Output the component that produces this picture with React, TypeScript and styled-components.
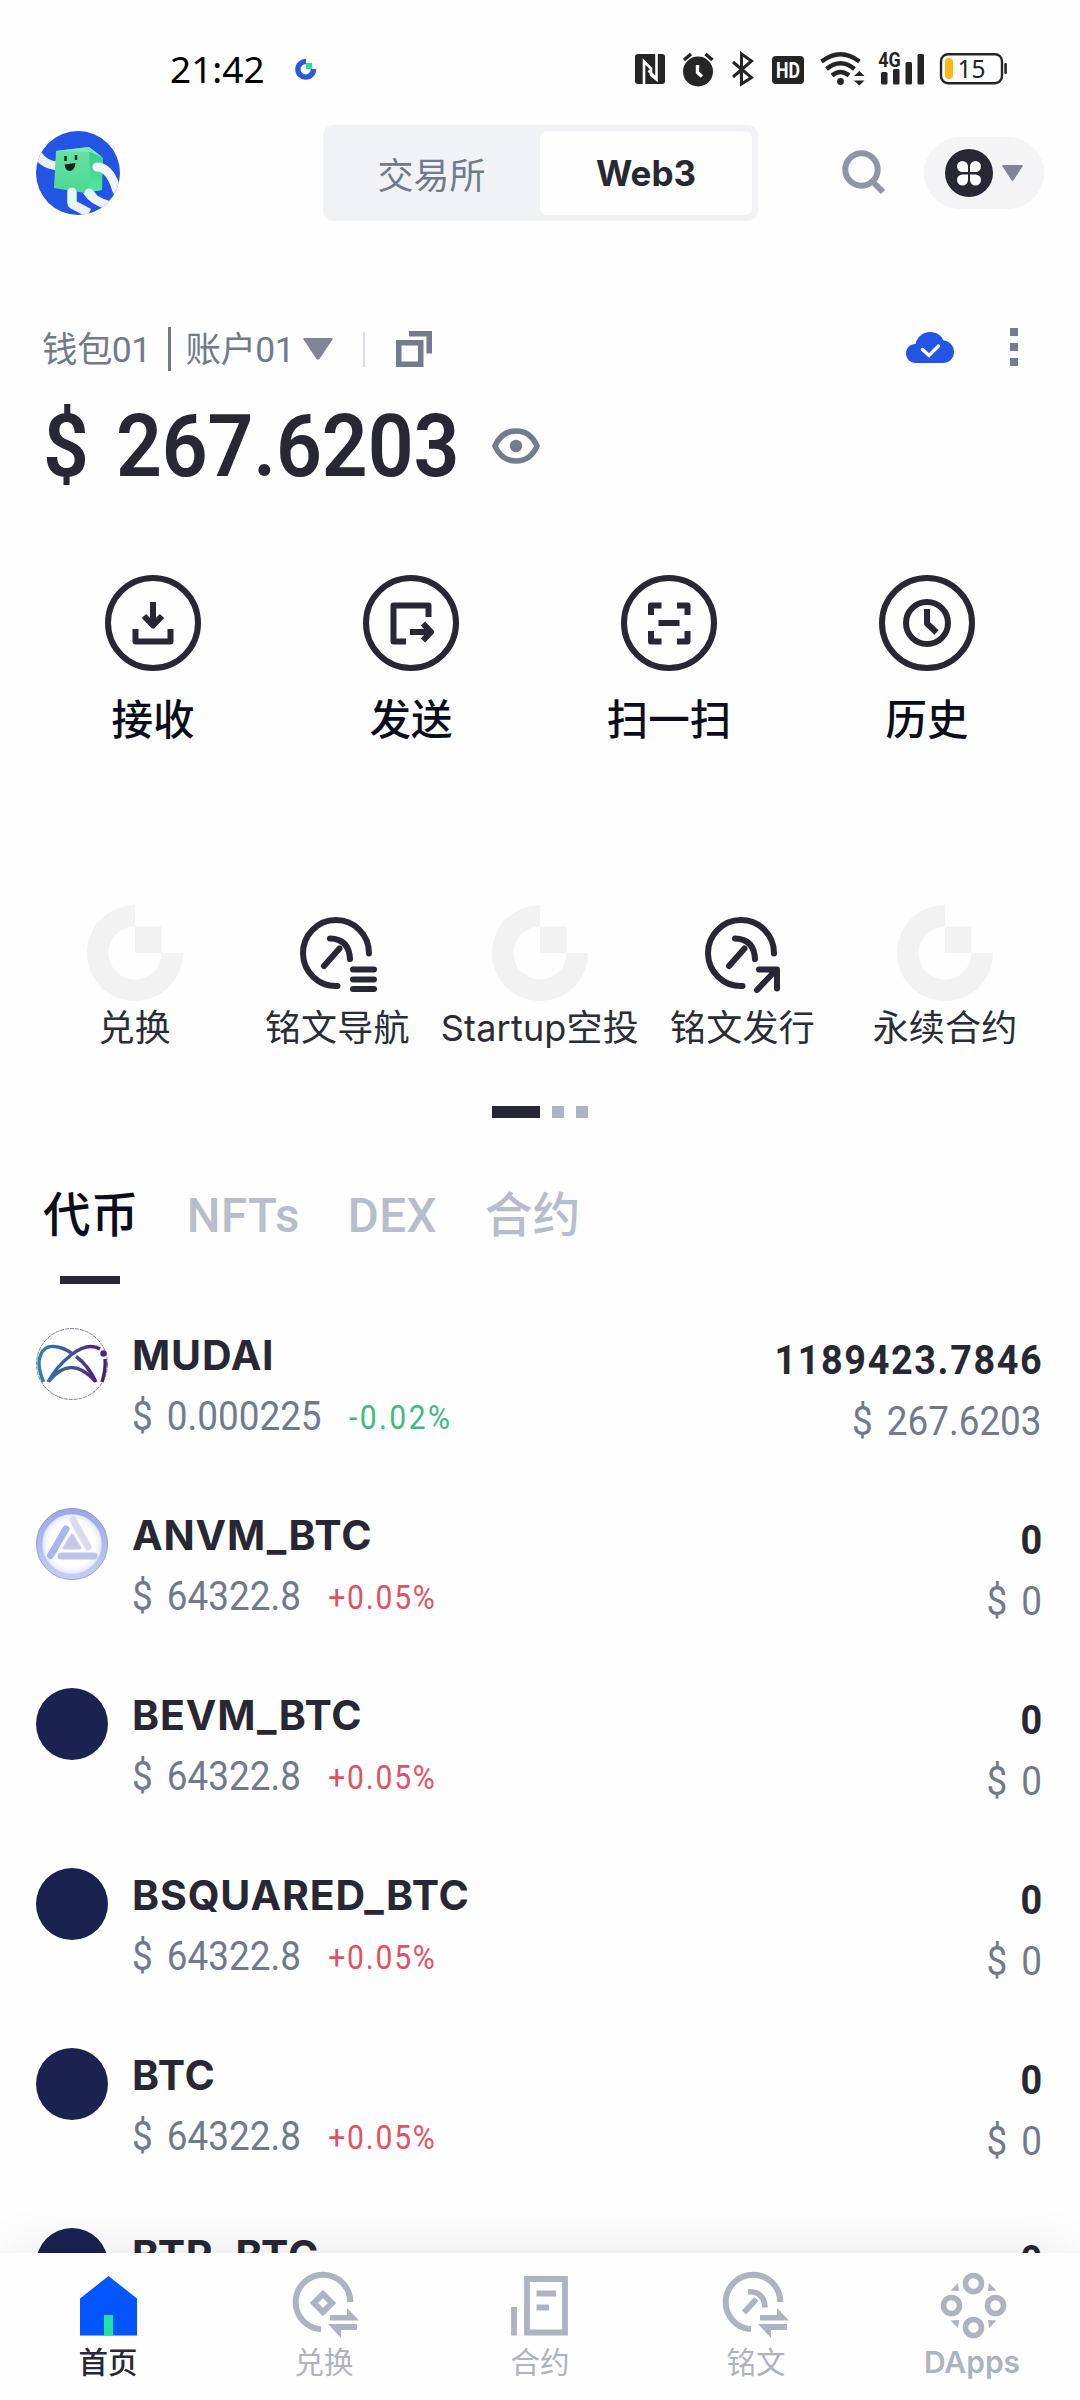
import React from 'react';
import styled, { createGlobalStyle } from 'styled-components';

const INK = '#272833';
const SLATE = '#717a8c';
const MUTED = '#adb3c0';
const UI = `Inter, 'Noto Sans CJK SC', sans-serif`;
const NUM = `Roboto, 'Noto Sans CJK SC', sans-serif`;

const GlobalStyle = createGlobalStyle`
  * { box-sizing: border-box; }
  body { margin: 0; background: #fefefe; }
`;

const Screen = styled.div`
  width: 1080px;
  height: 2400px;
  display: flex;
  flex-direction: column;
  overflow: hidden;
  background: #fefefe;
  color: ${INK};
  font-family: ${UI};
  white-space: nowrap;
`;

const Content = styled.main`
  flex: 1;
  min-height: 0;
  overflow: hidden;
`;

/* status bar */
const StatusBar = styled.div`
  display: flex;
  align-items: center;
  justify-content: space-between;
  height: 40px;
  margin-top: 49px;
  padding: 0 72px 0 170px;
`;
const StatusLeft = styled.div`
  display: flex;
  align-items: center;
  gap: 30px;
`;
const Clock = styled.span`
  font: 400 37px/40px 'Noto Sans', sans-serif;
  color: #000;
`;

/* header */
const Header = styled.header`
  display: flex;
  align-items: center;
  height: 96px;
  margin-top: 36px;
  padding: 0 36px;
`;
const Segment = styled.div`
  display: flex;
  width: 435px;
  height: 96px;
  margin-left: 203px;
  padding: 6px;
  border-radius: 10px;
  background: #f1f2f6;
`;
const SegmentItem = styled.div<{ $active?: boolean }>`
  flex: none;
  width: ${p => (p.$active ? 212 : 211)}px;
  line-height: ${p => (p.$active ? 84 : 90)}px;
  text-align: center;
  border-radius: 7px;
  font-size: ${p => (p.$active ? 35 : 36)}px;
  font-weight: ${p => (p.$active ? 700 : 400)};
  color: ${p => (p.$active ? INK : SLATE)};
  background: ${p => (p.$active ? '#fefefe' : 'transparent')};
  padding-right: ${p => (p.$active ? 0 : 6)}px;
`;
const SearchSlot = styled.div`
  display: flex;
  margin-left: 84px;
`;
const NetworkPill = styled.div`
  display: flex;
  align-items: center;
  gap: 9px;
  width: 120px;
  height: 72px;
  margin-left: auto;
  padding-left: 21px;
  border-radius: 36px;
  background: #f4f4f7;
`;

/* account */
const AccountRow = styled.div`
  display: flex;
  align-items: center;
  height: 44px;
  margin-top: 106px;
  padding: 0 62.5px 0 42px;
  color: ${SLATE};
`;
const AccountName = styled.span<{ $width: number }>`
  width: ${p => p.$width}px;
  padding-top: 1px;
  font: 400 35.5px/44px ${NUM};
  letter-spacing: -0.6px;
`;
const Bar = styled.i<{ $h: number; $c: string; $m: string }>`
  width: 2.5px;
  height: ${p => p.$h}px;
  margin: ${p => p.$m};
  background: ${p => p.$c};
`;
const CloudSlot = styled.div`
  display: flex;
  margin-left: auto;
  padding-bottom: 2px;
`;
const MenuDots = styled.div`
  display: flex;
  flex-direction: column;
  gap: 7px;
  margin: -4px 0 0 56px;
`;
const MenuDot = styled.i`
  width: 8px;
  height: 8px;
  background: #767b8e;
`;
const BalanceRow = styled.div`
  display: flex;
  align-items: center;
  height: 80px;
  margin-top: 35px;
  padding-left: 43px;
`;
const Balance = styled.div`
  width: 449px;
  font: 600 87px/80px ${NUM};
  letter-spacing: -0.2px;
  word-spacing: 8px;
  transform: scaleX(0.925);
  transform-origin: left center;
`;

/* actions */
const Actions = styled.div`
  display: grid;
  grid-template-columns: repeat(4, 258px);
  margin: 89px 0 0 24px;
`;
const Action = styled.div`
  display: flex;
  flex-direction: column;
  align-items: center;
`;
const ActionLabel = styled.span`
  margin-top: 25px;
  font-size: 41.5px;
  line-height: 48px;
  font-weight: 500;
  color: #0b0e1a;
`;
const Services = styled.div`
  display: grid;
  grid-template-columns: repeat(5, 202.6px);
  margin: 161px 0 0 33.4px;
`;
const ServiceLabel = styled.span`
  margin-top: 3px;
  font-size: 36px;
  line-height: 48px;
  letter-spacing: 0.2px;
  color: #2a2c36;
`;
const Pager = styled.div`
  display: flex;
  justify-content: center;
  gap: 12px;
  margin-top: 54px;
`;
const PagerMark = styled.i<{ $active?: boolean }>`
  width: ${p => (p.$active ? 48 : 12)}px;
  height: 12px;
  background: ${p => (p.$active ? INK : '#adb3c3')};
`;

/* asset tabs */
const Tabs = styled.div`
  display: flex;
  gap: 48px;
  margin: 70px 0 0 43px;
`;
const Tab = styled.div<{ $active?: boolean }>`
  display: flex;
  flex-direction: column;
  align-items: center;
  height: 96px;
  font: 500 47.5px/56px ${NUM};
  letter-spacing: 0.4px;
  color: ${p => (p.$active ? '#0b0e1a' : '#b8bdcb')};
`;
const TabLine = styled.i`
  width: 60px;
  height: 9px;
  margin: 32px 2px 0 0;
  background: ${INK};
`;

/* token list */
const TokenList = styled.div`
  margin-top: 44px;
`;
const TokenRow = styled.div`
  display: flex;
  height: 180px;
  padding: 0 38px 0 36px;
`;
const TokenInfo = styled.div`
  flex: 1;
  margin-left: 24px;
  padding-top: 2px;
`;
const TokenName = styled.div`
  font-size: 41px;
  line-height: 50px;
  font-weight: 700;
  letter-spacing: 0.85px;
`;
const PriceLine = styled.div`
  display: flex;
  align-items: center;
  gap: 30px;
  margin-top: 13px;
  transform: scaleX(0.91);
  transform-origin: left center;
`;
const Money = styled.span`
  font: 400 40.5px/46px ${NUM};
  word-spacing: 5.5px;
  color: ${SLATE};
`;
const Change = styled.span<{ $down?: boolean }>`
  padding-top: 3px;
  font: 400 33px/43px ${NUM};
  letter-spacing: ${p => (p.$down ? 2.7 : 2)}px;
  color: ${p => (p.$down ? '#3dba84' : '#e25163')};
`;
const TokenTotals = styled.div`
  display: flex;
  flex-direction: column;
  align-items: flex-end;
  padding-top: 7px;
  transform: scaleX(0.91);
  transform-origin: right center;
`;
const Amount = styled.span`
  margin: 0 -2px 13px 0;
  font: 700 41.5px/50px ${NUM};
  letter-spacing: 1.8px;
`;
const TokenDisc = styled.div`
  width: 72px;
  height: 72px;
  border-radius: 50%;
  background: #1a2250;
`;

/* bottom navigation */
const BottomNav = styled.nav`
  position: relative;
  z-index: 1;
  flex: none;
  display: grid;
  grid-template-columns: repeat(5, 216px);
  height: 147px;
  padding-top: 16px;
  background: #fefefe;
  box-shadow: 0 -12px 56px -14px rgba(0, 0, 0, 0.11);
`;
const NavItem = styled.div`
  display: flex;
  flex-direction: column;
  align-items: center;
`;
const NavLabel = styled.span<{ $active?: boolean; $latin?: boolean }>`
  font-size: ${p => (p.$latin ? 30 : 29.5)}px;
  line-height: 43px;
  font-weight: ${p => (p.$latin ? 600 : p.$active ? 500 : 400)};
  color: ${p => (p.$active ? INK : MUTED)};
`;

const StatusMark = () => (
  <svg width="22" height="22" viewBox="0 0 22 22">
    <path d="M11 3.5A7.8 7.8 0 1 0 18.5 11" fill="none" stroke="#2a58de" strokeWidth="5.4" />
    <rect x="11" y="5" width="6" height="6" fill="#27dfa5" />
  </svg>
);

const StatusIcons = () => (
  <svg width="374" height="36" viewBox="634 51 374 36" fill="#252525">
    <rect x="635" y="54" width="30" height="30" rx="3" />
    <path d="M644 84V61.500l7 7v6.500l5.500 4.500V54M656.500 79l-8-8.500" fill="none" stroke="#fefefe" strokeWidth="2.600" />
    <circle cx="698" cy="71.500" r="15" />
    <path d="M684 60l7-6M712.500 60l-7-6" stroke="#252525" strokeWidth="3.400" />
    <path d="M697.500 65v7.500l4.500 4" fill="none" stroke="#fefefe" strokeWidth="3.400" />
    <path d="M733 62l18.500 15.500L741.500 84V54l10 7L733 77" fill="none" stroke="#252525" strokeWidth="3" />
    <rect x="772" y="56" width="32" height="28" rx="4" />
    <text x="788" y="77.500" textAnchor="middle" fontFamily="Roboto, sans-serif" fontWeight="700" fontSize="22" textLength="24" lengthAdjust="spacingAndGlyphs" fill="#fefefe">HD</text>
    <g fill="none" stroke="#252525" strokeWidth="4.400">
      <path d="M821.500 61.500q19-14.500 38 0" />
      <path d="M826.500 69q14-11.500 28 0" />
      <path d="M832 75.500q8.500-7 17 0" />
    </g>
    <circle cx="840.500" cy="81.500" r="3.400" />
    <path d="M854 76h10.500l-5.200-5zM854 80.500h10.500l-5.200 5z" />
    <text x="889.500" y="67" textAnchor="middle" fontFamily="Roboto, sans-serif" fontWeight="700" fontSize="20" textLength="22.500" lengthAdjust="spacingAndGlyphs">4G</text>
    <rect x="881" y="72" width="6.500" height="12.500" rx="1.500" />
    <rect x="893" y="69" width="6.500" height="15.500" rx="1.500" />
    <rect x="905.500" y="62" width="6.500" height="22.500" rx="1.500" />
    <rect x="917.500" y="54" width="6.500" height="30.500" rx="1.500" />
    <rect x="941" y="54.200" width="61" height="29" rx="7" fill="none" stroke="#252525" strokeWidth="2.400" />
    <rect x="1004.300" y="63" width="2.600" height="11" rx="1.300" />
    <rect x="945" y="58" width="8" height="21" rx="4" fill="#fdb813" />
    <text x="971.500" y="77.500" textAnchor="middle" fontFamily="'Noto Sans', sans-serif" fontSize="24.500">15</text>
  </svg>
);

const Avatar = () => (
  <svg width="84" height="84" viewBox="0 0 84 84">
    <defs>
      <clipPath id="avatarClip"><circle cx="42" cy="42" r="42" /></clipPath>
      <linearGradient id="cubeFace" x1="0" y1="0" x2="0" y2="1">
        <stop offset="0" stopColor="#6be0a3" />
        <stop offset="1" stopColor="#4bd996" />
      </linearGradient>
      <linearGradient id="cubeSide" x1="0" y1="0" x2="0" y2="1">
        <stop offset="0" stopColor="#37c987" />
        <stop offset="1" stopColor="#52e79f" />
      </linearGradient>
    </defs>
    <g clipPath="url(#avatarClip)">
      <rect width="84" height="84" fill="#2454e4" />
      <g fill="none" stroke="#eef1fd" strokeLinejoin="round">
        <path d="M2 24q6 10 20 11" strokeWidth="9" />
        <path d="M36 54v19l17 9" strokeWidth="9" />
        <path d="M51 60q6 10 21 14" strokeWidth="9" />
      </g>
      <path d="M20 20l33-4 13 10-1 33-16 3-31-5z" fill="url(#cubeFace)" />
      <path d="M53 17l14 10-1 32-12 2z" fill="url(#cubeSide)" />
      <path d="M20 20l33-4 13 10-12-5z" fill="#7eebb2" />
      <path d="M61 36q13 0 20 24" fill="none" stroke="#f2f3fe" strokeWidth="9" strokeLinecap="round" />
      <path d="M36 61v10M53 62l3 3" stroke="#e6f8f8" strokeWidth="9" strokeLinecap="round" />
      <path d="M29.500 25v5M40 24v5" stroke="#10231c" strokeWidth="2.400" />
      <path d="M28.500 33.500l11-1.500q-1 8-6 8-4 0-5-6.500z" fill="#10231c" />
    </g>
  </svg>
);

const SearchIcon = () => (
  <svg width="44" height="46" viewBox="0 0 44 46" fill="none" stroke="#8f95a5" strokeWidth="6">
    <circle cx="19.500" cy="19.500" r="16.200" />
    <path d="M31 32l10 10" />
  </svg>
);

const CloverIcon = () => (
  <svg width="48" height="48" viewBox="0 0 48 48">
    <circle cx="24" cy="24" r="24" fill={INK} />
    <path d="M23 23h-5.500a5.500 5.500 0 1 1 5.500-5.500zM25 23h5.500a5.500 5.500 0 1 0-5.500-5.500zM23 25.500h-5.500a5.500 5.500 0 1 0 5.500 5.500zM25 25.500h5.500a5.500 5.500 0 1 1-5.500 5.500z" fill="#fefefe" />
  </svg>
);

const Caret = ({ w, h }: { w: number; h: number }) => (
  <svg width={w} height={h} viewBox="0 0 30 22" preserveAspectRatio="none">
    <path d="M1.500 0h27q2 0 1 1.600L16.500 21q-1.500 1.600-3 0L.5 1.600Q-.5 0 1.500 0z" fill="#7f8596" />
  </svg>
);

const CopyIcon = () => (
  <svg width="36" height="36" viewBox="0 0 36 36" fill="none" stroke="#757b8e" strokeWidth="5.500">
    <rect x="2.750" y="11.750" width="22" height="21.500" />
    <path d="M13 2.750h20.250V22.500" />
  </svg>
);

const CloudIcon = () => (
  <svg width="48" height="32" viewBox="0 0 48 32">
    <path d="M10 31C4 31 0 26.500 0 21.500c0-5.500 4-9.500 9.500-9.500C11 5.500 16.500 0 24 0c6.500 0 11.500 3.500 13.500 8.500C43.500 9 48 13.500 48 20c0 6.500-5 11-11 11z" fill="#2454e4" />
    <path d="M16.500 17.500l6.500 6 9.500-9.500" fill="none" stroke="#fff" strokeWidth="3.400" strokeLinecap="round" />
  </svg>
);

const EyeIcon = () => (
  <svg width="48" height="36" viewBox="0 0 48 36" fill="none">
    <path d="M3 18Q9.500 3 24 3t21 15Q38.500 33 24 33T3 18z" stroke="#757b8e" strokeWidth="5.600" />
    <circle cx="24" cy="18" r="6.200" fill="#757b8e" />
  </svg>
);

const ringPaths: Record<string, React.ReactNode> = {
  receive: <path d="M48 27v23M39 41l9 9.500 9-9.500M30.500 54v12.500h35V54" />,
  send: <path d="M43 66.500H30.500v-36h35V42M47 57h20M60 48.500l8 8.500-8 8.500" />,
  scan: <path d="M30 40v-9.500h10.500M56 30.500h10.500V40M66.500 56v10.500H56M40.500 66.500H30V56M37.500 48h21" />,
  history: (
    <>
      <circle cx="48" cy="48" r="21" />
      <path d="M48 34v14.500l9.500 9" />
    </>
  ),
};

const RingIcon = ({ kind }: { kind: string }) => (
  <svg width="96" height="96" viewBox="0 0 96 96" fill="none" stroke={INK} strokeWidth="6" strokeLinejoin="round">
    <circle cx="48" cy="48" r="45" />
    {ringPaths[kind]}
  </svg>
);

const ServiceIcon = ({ kind }: { kind: string }) => {
  if (kind === 'logo') {
    return (
      <svg width="96" height="96" viewBox="0 0 96 96" fill="#f2f2f2">
        <path d="M48 0v21.500A26.500 26.500 0 1 0 74.500 48H96A48 48 0 1 1 48 0z" />
        <rect x="48" y="21.500" width="26.500" height="26.500" />
      </svg>
    );
  }
  return (
    <svg width="96" height="96" viewBox="0 0 96 96" fill="none" stroke={INK} strokeWidth="6" strokeLinecap="round" strokeLinejoin="round">
      <path d="M80 48.500A33 33 0 1 0 48.500 81" />
      <path d="M41 33.500Q60 34 61 54M35 61l15.500-17.500" />
      {kind === 'list' ? <path d="M64 64.500h21M64 74.500h21M64 84h21" /> : <path d="M65 64.500h18v19M63 85l19-20" />}
    </svg>
  );
};

const MudaiLogo = () => (
  <svg width="72" height="72" viewBox="0 0 72 72" fill="none">
    <defs>
      <linearGradient id="mudai" gradientUnits="userSpaceOnUse" x1="2" y1="36" x2="70" y2="36">
        <stop offset="0" stopColor="#2f80b4" />
        <stop offset="0.45" stopColor="#3f5799" />
        <stop offset="0.8" stopColor="#4b2b80" />
        <stop offset="1" stopColor="#44206e" />
      </linearGradient>
    </defs>
    <circle cx="36" cy="36" r="35.500" stroke="#74798c" strokeWidth="0.900" strokeDasharray="4 1" />
    <g stroke="url(#mudai)" strokeWidth="3.400">
      <path d="M7.500 54Q0 36 5 26 9 17.500 18 18.500q9 .5 18 7M40 28.500Q52 37 60 54" />
      <path d="M12 54q8-15 23-27Q52 14 64 21M13 53q22-27 46 0M69 31q1 10-3 23" />
    </g>
    <circle cx="67.500" cy="25.500" r="3.200" fill="#48257a" />
  </svg>
);

const AnvmLogo = () => (
  <svg width="72" height="72" viewBox="0 0 72 72" fill="none">
    <defs>
      <linearGradient id="anvmRing" x1="0" y1="0" x2="0" y2="1">
        <stop offset="0" stopColor="#98a9ee" />
        <stop offset="1" stopColor="#c5cdf4" />
      </linearGradient>
      <radialGradient id="anvmFill">
        <stop offset="0.700" stopColor="#fff" />
        <stop offset="1" stopColor="#d8dff9" />
      </radialGradient>
    </defs>
    <circle cx="36" cy="36" r="32.700" fill="url(#anvmFill)" stroke="url(#anvmRing)" strokeWidth="6" />
    <circle cx="36" cy="36" r="35.600" stroke="#8088a8" strokeWidth="0.600" />
    <g strokeLinecap="round" strokeWidth="7">
      <path d="M37 12l15 27" stroke="#d9dbee" />
      <path d="M30 21L14.500 47.500" stroke="#a9b6ef" />
      <path d="M25 48h33" stroke="#bcc3e4" />
    </g>
    <path d="M36 27l8 13H28z" fill="#c6cae9" stroke="#c6cae9" strokeWidth="3" strokeLinejoin="round" />
  </svg>
);

const swapArrows = 'M42 46h17v-7l12 12.500H42zM40 55h29v6H53v8z';

const NavIcon = ({ kind }: { kind: string }) => (
  <svg width="72" height="72" viewBox="0 0 72 72" fill="none">
    {kind === 'home' && (
      <>
        <path d="M36.500 7L65 29.500V66.500H8V29.500z" fill="#0356fd" />
        <rect x="32" y="46" width="9" height="20.500" fill="#1fe0a5" />
      </>
    )}
    {(kind === 'swap' || kind === 'inscribe') && (
      <g transform={kind === 'inscribe' ? 'translate(-2 0)' : undefined}>
        <path d="M62.300 33A27.300 27.300 0 1 0 33 60.300" stroke={MUTED} strokeWidth="6" />
        <path d={swapArrows} fill={MUTED} />
        {kind === 'swap' ? (
          <path d="M35 25l9 9-9 9-9-9z" stroke={MUTED} strokeWidth="6" />
        ) : (
          <path d="M30 22.800Q46 22 47 38.500M26 43.500l12.500-13.500" stroke={MUTED} strokeWidth="5.600" />
        )}
      </g>
    )}
    {kind === 'contract' && (
      <path d="M10 38v28.500M23 10h38v53.500H23zM32.500 24.500H52M32.500 38.500H45" stroke={MUTED} strokeWidth="5.800" />
    )}
    {kind === 'dapps' && (
      <>
        <g stroke={MUTED} strokeWidth="5.600">
          <circle cx="37.500" cy="14.500" r="8" />
          <circle cx="15.500" cy="36.500" r="8" />
          <circle cx="59.500" cy="36.500" r="8" />
          <circle cx="37.500" cy="58.500" r="8" />
        </g>
        <path d="M14.500 21.500l7.500-7.500 1 8zM60.500 21.500L53 14l-1 8zM14.500 51.500L22 59l1-8zM60.500 51.500L53 59l-1-8z" fill={MUTED} />
      </>
    )}
  </svg>
);

const actions = [
  { kind: 'receive', label: '接收' },
  { kind: 'send', label: '发送' },
  { kind: 'scan', label: '扫一扫' },
  { kind: 'history', label: '历史' },
];

const services = [
  { kind: 'logo', label: '兑换' },
  { kind: 'list', label: '铭文导航' },
  { kind: 'logo', label: 'Startup空投' },
  { kind: 'launch', label: '铭文发行' },
  { kind: 'logo', label: '永续合约' },
];

const tokens = [
  { name: 'MUDAI', price: '0.000225', change: '-0.02%', amount: '1189423.7846', value: '267.6203', icon: <MudaiLogo /> },
  { name: 'ANVM_BTC', price: '64322.8', change: '+0.05%', amount: '0', value: '0', icon: <AnvmLogo /> },
  { name: 'BEVM_BTC', price: '64322.8', change: '+0.05%', amount: '0', value: '0' },
  { name: 'BSQUARED_BTC', price: '64322.8', change: '+0.05%', amount: '0', value: '0' },
  { name: 'BTC', price: '64322.8', change: '+0.05%', amount: '0', value: '0' },
  { name: 'BTR_BTC', price: '64322.8', change: '+0.05%', amount: '0', value: '0' },
];

const navItems = [
  { kind: 'home', label: '首页' },
  { kind: 'swap', label: '兑换' },
  { kind: 'contract', label: '合约' },
  { kind: 'inscribe', label: '铭文' },
  { kind: 'dapps', label: 'DApps' },
];

export default function App() {
  return (
    <Screen>
      <GlobalStyle />
      <Content>
        <StatusBar>
          <StatusLeft>
            <Clock>21:42</Clock>
            <StatusMark />
          </StatusLeft>
          <StatusIcons />
        </StatusBar>

        <Header>
          <Avatar />
          <Segment>
            <SegmentItem>交易所</SegmentItem>
            <SegmentItem $active>Web3</SegmentItem>
          </Segment>
          <SearchSlot><SearchIcon /></SearchSlot>
          <NetworkPill>
            <CloverIcon />
            <Caret w={21} h={16} />
          </NetworkPill>
        </Header>

        <AccountRow>
          <AccountName $width={107}>钱包01</AccountName>
          <Bar $h={44} $c={SLATE} $m="0 15px 0 19px" />
          <AccountName $width={117}>账户01</AccountName>
          <Caret w={30} h={22} />
          <Bar $h={35} $c="#dcdfe8" $m="0 31px 0 30px" />
          <CopyIcon />
          <CloudSlot><CloudIcon /></CloudSlot>
          <MenuDots>
            <MenuDot />
            <MenuDot />
            <MenuDot />
          </MenuDots>
        </AccountRow>
        <BalanceRow>
          <Balance>$ 267.6203</Balance>
          <EyeIcon />
        </BalanceRow>

        <Actions>
          {actions.map(a => (
            <Action key={a.kind}>
              <RingIcon kind={a.kind} />
              <ActionLabel>{a.label}</ActionLabel>
            </Action>
          ))}
        </Actions>

        <Services>
          {services.map(s => (
            <Action key={s.label}>
              <ServiceIcon kind={s.kind} />
              <ServiceLabel>{s.label}</ServiceLabel>
            </Action>
          ))}
        </Services>
        <Pager>
          <PagerMark $active />
          <PagerMark />
          <PagerMark />
        </Pager>

        <Tabs>
          <Tab $active>
            代币
            <TabLine />
          </Tab>
          <Tab>NFTs</Tab>
          <Tab>DEX</Tab>
          <Tab>合约</Tab>
        </Tabs>

        <TokenList>
          {tokens.map(t => (
            <TokenRow key={t.name}>
              {t.icon ?? <TokenDisc />}
              <TokenInfo>
                <TokenName>{t.name}</TokenName>
                <PriceLine>
                  <Money>$ {t.price}</Money>
                  <Change $down={t.change.startsWith('-')}>{t.change}</Change>
                </PriceLine>
              </TokenInfo>
              <TokenTotals>
                <Amount>{t.amount}</Amount>
                <Money>$ {t.value}</Money>
              </TokenTotals>
            </TokenRow>
          ))}
        </TokenList>
      </Content>

      <BottomNav>
        {navItems.map((n, i) => (
          <NavItem key={n.kind}>
            <NavIcon kind={n.kind} />
            <NavLabel $active={i === 0} $latin={n.kind === 'dapps'}>{n.label}</NavLabel>
          </NavItem>
        ))}
      </BottomNav>
    </Screen>
  );
}
